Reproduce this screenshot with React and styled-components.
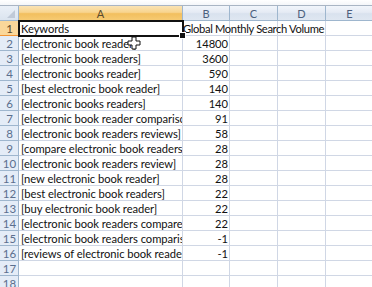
import * as React from 'react';
import styled, { createGlobalStyle, css } from 'styled-components';

const GlobalStyle = createGlobalStyle`
  html, body {
    margin: 0;
    padding: 0;
    background: #ffffff;
    overflow: hidden;
  }
`;

const COLS = [
  { key: 'hdr', width: 19 },
  { key: 'A', width: 164 },
  { key: 'B', width: 47 },
  { key: 'C', width: 48 },
  { key: 'D', width: 48 },
  { key: 'E', width: 48 },
];

const rows = [
  ['Keywords', 'Global Monthly Search Volume'],
  ['[electronic book reader]', 14800],
  ['[electronic book readers]', 3600],
  ['[electronic books reader]', 590],
  ['[best electronic book reader]', 140],
  ['[electronic books readers]', 140],
  ['[electronic book reader comparison]', 91],
  ['[electronic book readers reviews]', 58],
  ['[compare electronic book readers]', 28],
  ['[electronic book readers review]', 28],
  ['[new electronic book reader]', 28],
  ['[best electronic book readers]', 22],
  ['[buy electronic book reader]', 22],
  ['[electronic book readers compared]', 22],
  ['[electronic book readers comparison]', -1],
  ['[reviews of electronic book reader]', -1],
  ['', ''],
  ['', ''],
];

const Screen = styled.div`
  position: relative;
  width: 372px;
  height: 287px;
  overflow: hidden;
  background: #ffffff;
  font-family: Lato, 'Liberation Sans', sans-serif;
`;

const FormulaEdge = styled.div`
  height: 5px;
  background: linear-gradient(#ffffff, #f4f6f9);
  border-bottom: 1px solid #a9b5c4;
`;

const Grid = styled.div`
  display: grid;
  grid-template-columns: ${COLS.map((c) => `${c.width}px`).join(' ')} 1fr;
  grid-auto-rows: 15px;
`;

const headerBase = css`
  box-sizing: border-box;
  display: flex;
  align-items: center;
  justify-content: center;
  font-size: 11px;
  color: #4c5f7d;
  border-right: 1px solid #9eb6ce;
  border-bottom: 1px solid #9eb6ce;
`;

const ColHeader = styled.div`
  ${headerBase}
  background: ${({ $active }) =>
    $active
      ? 'linear-gradient(#fae3b4 0%, #f8d48e 45%, #f2bf5e 55%, #f6ca72 100%)'
      : 'linear-gradient(#f1f5fb 0%, #e5ebf4 45%, #d9e2ee 55%, #dfe7f1 100%)'};
  ${({ $active }) => $active && 'border-bottom-color: #f29536; color: #5a4a2c;'}
`;

const Corner = styled.div`
  ${headerBase}
  position: relative;
  background: linear-gradient(#eaf0f8, #dbe4ef);

  &::after {
    content: '';
    position: absolute;
    right: 3px;
    bottom: 2px;
    width: 0;
    height: 0;
    border-left: 8px solid transparent;
    border-bottom: 8px solid #c0cad8;
  }
`;

const RowHeader = styled.div`
  ${headerBase}
  font-size: 11.5px;
  padding-left: 1px;
  background: ${({ $active }) => ($active ? '#fad79a' : '#e4ecf7')};
  border-bottom-color: ${({ $active }) => ($active ? '#f29536' : '#9eb6ce')};
  color: ${({ $active }) => ($active ? '#5a4a2c' : '#5b6f8e')};
`;

const Cell = styled.div`
  box-sizing: border-box;
  display: flex;
  align-items: center;
  justify-content: ${({ $num }) => ($num ? 'flex-end' : 'flex-start')};
  padding: 0 1px 0 ${({ $tight }) => ($tight ? '0' : '2px')};
  font-size: ${({ $tight }) => ($tight ? '11.2px' : '11.2px')};
  letter-spacing: ${({ $tight }) => ($tight ? '-0.35px' : '-0.05px')};
  color: #111111;
  white-space: nowrap;
  overflow: ${({ $clip }) => ($clip ? 'hidden' : 'visible')};
  border-right: 1px solid #d0d7e5;
  border-bottom: 1px solid #d0d7e5;
  position: relative;
  z-index: ${({ $over }) => ($over ? 1 : 0)};
  background: ${({ $over }) => ($over ? '#ffffff' : 'transparent')};
`;

const Selection = styled.div`
  position: absolute;
  left: 18px;
  top: 20px;
  width: 166px;
  height: 17px;
  box-sizing: border-box;
  border: 2px solid #111111;
  pointer-events: none;
  z-index: 3;

  &::after {
    content: '';
    position: absolute;
    right: -4px;
    bottom: -4px;
    width: 5px;
    height: 5px;
    background: #111111;
    border: 1px solid #ffffff;
  }
`;

const Cursor = styled.svg`
  position: absolute;
  left: 127px;
  top: 36px;
  z-index: 4;
`;

const App = () => (
  <>
    <GlobalStyle />
    <Screen>
      <FormulaEdge />
      <Grid>
        <Corner />
        {COLS.slice(1).map((c) => (
          <ColHeader key={c.key} $active={c.key === 'A'}>
            {c.key}
          </ColHeader>
        ))}
        <ColHeader />
        {rows.map((r, i) => {
          const n = i + 1;
          const isNum = typeof r[1] === 'number';
          const first = i === 0;
          return (
            <React.Fragment key={n}>
              <RowHeader $active={n === 1}>{n}</RowHeader>
              <Cell $clip={!first} $over={first}>{r[0]}</Cell>
              <Cell $num={isNum} $over={first} $tight={first}>{r[1]}</Cell>
              <Cell />
              <Cell />
              <Cell />
              <Cell />
            </React.Fragment>
          );
        })}
      </Grid>
      <Selection />
      <Cursor width="14" height="14" viewBox="0 0 14 14">
        <path
          d="M5 1h4v4h4v4H9v4H5V9H1V5h4z"
          fill="#ffffff"
          stroke="#111111"
          strokeWidth="1"
        />
      </Cursor>
    </Screen>
  </>
);

export default App;
